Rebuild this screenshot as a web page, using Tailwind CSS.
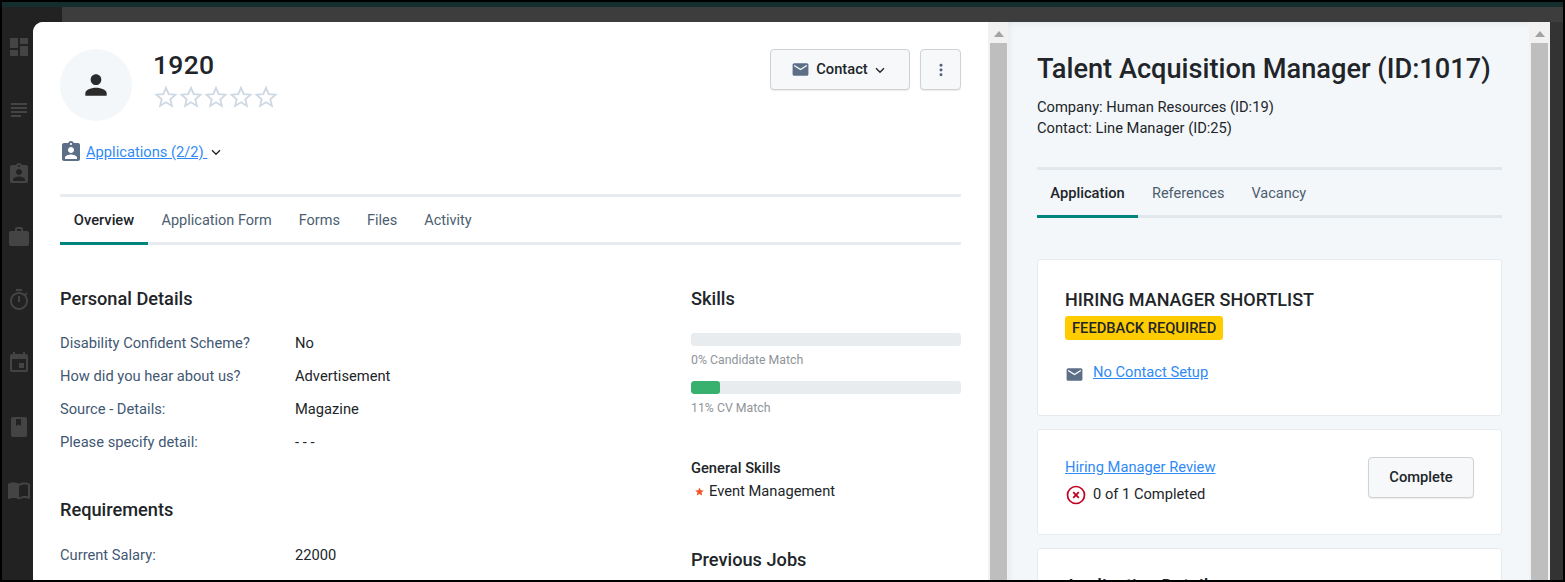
<!DOCTYPE html>
<html>
<head>
<meta charset="utf-8">
<script src="https://cdn.jsdelivr.net/npm/@tailwindcss/browser@4"></script>
</head>
<body class="bg-black">
<div class="relative w-[1565px] h-[582px] overflow-hidden bg-black font-['Roboto',sans-serif] text-[14.7px] text-[#212529]">
  <!-- Backdrop -->
  <div class="flex flex-col absolute left-[2px] top-[2px] w-[1561px] h-[578px]">
    <div class="h-[5px] bg-[#142e2e]"></div>
    <div class="flex flex-1">
      <aside class="w-[60px] bg-[#222222] flex flex-col items-start pl-[5px] pt-[28px] gap-[39.300px] text-[#444444]">
        <svg width="24" height="24" viewBox="0 0 24 24" fill="currentColor"><path d="M3 13h8V3H3v10zm0 8h8v-6H3v6zm10 0h8V11h-8v10zm0-18v6h8V3h-8z"/></svg>
        <svg width="24" height="24" viewBox="0 0 24 24" fill="currentColor"><path d="M14 17H4v2h10v-2zm6-8H4v2h16V9zM4 15h16v-2H4v2zM4 5v2h16V5H4z"/></svg>
        <svg width="24" height="24" viewBox="0 0 24 24" fill="currentColor"><path d="M19 3h-4.180C14.400 1.840 13.300 1 12 1s-2.400.84-2.820 2H5c-1.100 0-2 .9-2 2v14c0 1.100.9 2 2 2h14c1.100 0 2-.9 2-2V5c0-1.100-.9-2-2-2zm-7 0c.55 0 1 .45 1 1s-.45 1-1 1-1-.45-1-1 .45-1 1-1zm0 4c1.660 0 3 1.340 3 3s-1.340 3-3 3-3-1.340-3-3 1.340-3 3-3zm6 12H6v-1.400c0-2 4-3.100 6-3.100s6 1.100 6 3.100V19z"/></svg>
        <svg width="24" height="24" viewBox="0 0 24 24" fill="currentColor"><path d="M20 6h-4V4c0-1.110-.89-2-2-2h-4c-1.110 0-2 .89-2 2v2H4c-1.110 0-1.990.89-1.990 2L2 19c0 1.110.89 2 2 2h16c1.110 0 2-.89 2-2V8c0-1.110-.89-2-2-2zm-6 0h-4V4h4v2z"/></svg>
        <svg width="24" height="24" viewBox="0 0 24 24" fill="currentColor"><path d="M15 1H9v2h6V1zm-4 13h2V8h-2v6zm8.030-6.610l1.420-1.420c-.43-.51-.9-.99-1.410-1.410l-1.420 1.420C16.070 4.740 14.120 4 12 4c-4.970 0-9 4.030-9 9s4.020 9 9 9 9-4.030 9-9c0-2.120-.74-4.070-1.970-5.610zM12 20c-3.870 0-7-3.130-7-7s3.130-7 7-7 7 3.130 7 7-3.130 7-7 7z"/></svg>
        <svg width="24" height="24" viewBox="0 0 24 24" fill="currentColor"><path d="M17 12h-5v5h5v-5zM16 1v2H8V1H6v2H5c-1.110 0-1.990.9-1.990 2L3 19c0 1.100.89 2 2 2h14c1.100 0 2-.9 2-2V5c0-1.100-.9-2-2-2h-1V1h-2zm3 18H5V8h14v11z"/></svg>
        <svg width="24" height="24" viewBox="0 0 24 24" fill="currentColor"><path d="M18 2H6c-1.100 0-2 .9-2 2v16c0 1.100.9 2 2 2h12c1.100 0 2-.9 2-2V4c0-1.100-.9-2-2-2zM9 4h5v7l-2.500-1.500L9 11V4z"/></svg>
        <svg width="24" height="24" viewBox="0 0 24 24" fill="currentColor"><path d="M21 5c-1.110-.35-2.330-.5-3.500-.5-1.950 0-4.050.4-5.500 1.500-1.450-1.100-3.550-1.500-5.500-1.500S2.450 4.900 1 6v14.650c0 .25.25.5.5.5.1 0 .15-.05.25-.05C3.100 20.450 5.050 20 6.500 20c1.950 0 4.050.4 5.500 1.500 1.350-.85 3.800-1.500 5.500-1.500 1.650 0 3.350.3 4.750 1.050.1.05.15.05.25.05.25 0 .5-.25.5-.5V6c-.6-.45-1.250-.75-2-1zm0 13.500c-1.100-.35-2.300-.5-3.500-.5-1.700 0-4.150.65-5.500 1.500V8c1.350-.85 3.800-1.500 5.500-1.500 1.200 0 2.400.15 3.500.5v11.500z"/></svg>
      </aside>
      <div class="flex-1 flex flex-col bg-[#333333]">
        <div class="h-[15px] bg-[#3d3d3d]"></div>
      </div>
    </div>
  </div>

  <!-- Modal window -->
  <div class="absolute left-[33px] top-[22px] w-[1517px] h-[558px] flex rounded-tl-[10px] overflow-hidden bg-white">
    <!-- Left pane -->
    <section class="w-[955px] shrink-0 px-[27px] pt-[27px] bg-white overflow-hidden">
      <div class="flex justify-between items-start">
        <div class="flex">
          <div class="w-[72px] h-[72px] rounded-full bg-[#f4f7fa] flex items-center justify-center">
            <svg width="32" height="32" viewBox="0 0 24 24" fill="#2b2b2b"><path d="M12 12c2.210 0 4-1.790 4-4s-1.790-4-4-4-4 1.790-4 4 1.790 4 4 4zm0 2c-2.670 0-8 1.340-8 4v2h16v-2c0-2.660-5.330-4-8-4z"/></svg>
          </div>
          <div class="ml-[21px]">
            <h1 class="text-[26.500px] leading-[30px] font-medium tracking-[0.3px] text-[#212529] mt-[1px]">1920</h1>
            <div class="flex mt-[5px] ml-[1px] gap-[1px] text-[#ced8e2]">
              <svg width="24" height="24" viewBox="0 0 24 24" fill="none" stroke="currentColor" stroke-width="1.800"><path d="M12 2.800l2.700 6.300 6.800.6-5.200 4.500 1.600 6.700-5.900-3.600-5.900 3.600 1.600-6.700-5.200-4.500 6.800-.6z"/></svg>
              <svg width="24" height="24" viewBox="0 0 24 24" fill="none" stroke="currentColor" stroke-width="1.800"><path d="M12 2.800l2.700 6.300 6.800.6-5.200 4.500 1.600 6.700-5.900-3.600-5.900 3.600 1.600-6.700-5.200-4.500 6.800-.6z"/></svg>
              <svg width="24" height="24" viewBox="0 0 24 24" fill="none" stroke="currentColor" stroke-width="1.800"><path d="M12 2.800l2.700 6.300 6.800.6-5.200 4.500 1.600 6.700-5.900-3.600-5.900 3.600 1.600-6.700-5.200-4.500 6.800-.6z"/></svg>
              <svg width="24" height="24" viewBox="0 0 24 24" fill="none" stroke="currentColor" stroke-width="1.800"><path d="M12 2.800l2.700 6.300 6.800.6-5.200 4.500 1.600 6.700-5.900-3.600-5.900 3.600 1.600-6.700-5.200-4.500 6.800-.6z"/></svg>
              <svg width="24" height="24" viewBox="0 0 24 24" fill="none" stroke="currentColor" stroke-width="1.800"><path d="M12 2.800l2.700 6.300 6.800.6-5.200 4.500 1.600 6.700-5.900-3.600-5.900 3.600 1.600-6.700-5.200-4.500 6.800-.6z"/></svg>
            </div>
          </div>
        </div>
        <div class="flex gap-[10px]">
          <button class="w-[140px] h-[41px] pr-[1px] flex items-center justify-center rounded-[4px] border border-[#d0d3d6] bg-[#f6f8fa] font-medium shadow-[0_1px_1px_rgba(0,0,0,0.08)]">
            <svg class="mr-[6px]" width="19" height="19" viewBox="0 0 24 24" fill="#5c6f87"><path d="M20 4H4c-1.100 0-1.990.9-1.990 2L2 18c0 1.100.9 2 2 2h16c1.100 0 2-.9 2-2V6c0-1.100-.9-2-2-2zm0 4l-8 5-8-5V6l8 5 8-5v2z"/></svg>
            Contact
            <svg class="ml-[4px]" width="16" height="16" viewBox="0 0 24 24" fill="none" stroke="#212529" stroke-width="2"><path d="M6 9.500l6 6 6-6"/></svg>
          </button>
          <button class="w-[41px] h-[41px] flex items-center justify-center rounded-[4px] border border-[#d0d3d6] bg-[#f6f8fa] shadow-[0_1px_1px_rgba(0,0,0,0.08)]">
            <svg width="16" height="16" viewBox="0 0 24 24" fill="#4d6178"><circle cx="12" cy="5" r="2.200"/><circle cx="12" cy="12" r="2.200"/><circle cx="12" cy="19" r="2.200"/></svg>
          </button>
        </div>
      </div>

      <div class="flex items-center mt-[19px] h-[24px]">
        <svg class="ml-[-1px]" width="24" height="24" viewBox="0 0 24 24" fill="#5c6f87"><path d="M19 3h-4.180C14.400 1.840 13.300 1 12 1s-2.400.84-2.820 2H5c-1.100 0-2 .9-2 2v14c0 1.100.9 2 2 2h14c1.100 0 2-.9 2-2V5c0-1.100-.9-2-2-2zm-7 0c.55 0 1 .45 1 1s-.45 1-1 1-1-.45-1-1 .45-1 1-1zm0 4c1.660 0 3 1.340 3 3s-1.340 3-3 3-3-1.340-3-3 1.340-3 3-3zm6 12H6v-1.400c0-2 4-3.100 6-3.100s6 1.100 6 3.100V19z"/></svg>
        <a class="ml-[3px] text-[#2f8af5] underline whitespace-pre">Applications (2/2) </a>
        <svg class="ml-[1px]" width="16" height="16" viewBox="0 0 24 24" fill="none" stroke="#212529" stroke-width="2"><path d="M6 9.500l6 6 6-6"/></svg>
      </div>

      <nav class="mt-[30px] h-[51px] border-y-[3px] border-[#e9ecef] flex text-[14.500px]">
        <a class="h-[48px] -mb-[3px] w-[88px] pt-[1px] flex items-center justify-center text-[14.700px] font-medium text-[#212529] border-b-[3px] border-[#00857c]">Overview</a>
        <a class="ml-[13.500px] h-[47px] flex items-center text-[#4c5e70]">Application Form</a>
        <a class="ml-[27px] h-[47px] flex items-center text-[#4c5e70]">Forms</a>
        <a class="ml-[27px] h-[47px] flex items-center text-[#4c5e70]">Files</a>
        <a class="ml-[27px] h-[47px] flex items-center text-[#4c5e70]">Activity</a>
      </nav>

      <div class="flex mt-[43px]">
        <div class="w-[631px] shrink-0">
          <h2 class="text-[18.200px] leading-[22px] font-medium text-[#212529]">Personal Details</h2>
          <dl class="mt-[17px] grid grid-cols-[235px_1fr] auto-rows-[33px] leading-[33px]">
            <dt class="text-[#3f5873]">Disability Confident Scheme?</dt><dd>No</dd>
            <dt class="text-[#3f5873]">How did you hear about us?</dt><dd>Advertisement</dd>
            <dt class="text-[#3f5873]">Source - Details:</dt><dd>Magazine</dd>
            <dt class="text-[#3f5873]">Please specify detail:</dt><dd>- - -</dd>
          </dl>
          <h2 class="mt-[40px] text-[18.200px] leading-[22px] font-medium text-[#212529]">Requirements</h2>
          <dl class="mt-[18px] grid grid-cols-[235px_1fr] auto-rows-[33px] leading-[33px]">
            <dt class="text-[#3f5873]">Current Salary:</dt><dd>22000</dd>
            <dt class="text-[#3f5873]">Expected Salary:</dt><dd>25000</dd>
          </dl>
        </div>
        <div class="w-[270px] shrink-0">
          <h2 class="text-[18.200px] leading-[22px] font-medium text-[#212529]">Skills</h2>
          <div class="mt-[23px] h-[13px] rounded-[3px] bg-[#e9ecef]"></div>
          <p class="mt-[6px] text-[12.300px] leading-[16px] text-[#8e9499]">0% Candidate Match</p>
          <div class="mt-[13px] h-[13px] rounded-[3px] bg-[#e9ecef] overflow-hidden"><div class="h-full rounded-[3px] bg-[#38b06e]" style="width:29px"></div></div>
          <p class="mt-[6px] text-[12.300px] leading-[16px] text-[#8e9499]">11% CV Match</p>
          <h3 class="mt-[42px] font-medium leading-[20px]">General Skills</h3>
          <p class="mt-[3px] leading-[20px] flex items-center">
            <svg class="ml-[4px] mr-[5px]" width="9" height="9" viewBox="0 0 24 24" fill="#f0562b"><path d="M12 1l3.300 7.600 8.200.7-6.200 5.400 1.900 8.100L12 18.500l-7.200 4.300 1.900-8.100L.5 9.300l8.200-.7z"/></svg>
            Event Management
          </p>
          <h2 class="mt-[48px] text-[18.200px] leading-[22px] font-medium text-[#212529]">Previous Jobs</h2>
        </div>
      </div>
    </section>

    <!-- Left scrollbar -->
    <div class="w-[20px] shrink-0 bg-[#f1f1f1] flex flex-col items-center pl-[1px]">
      <svg class="mt-[9px]" width="10" height="6" viewBox="0 0 10 6" fill="#a3a3a3"><path d="M5 0l5 6H0z"/></svg>
      <div class="mt-[6px] flex-1 w-[17px] bg-[#bebebe]"></div>
    </div>

    <!-- Right pane -->
    <section class="w-[521px] shrink-0 bg-[#f4f7fa] pl-[29px] pr-[27px] pt-[28px] overflow-hidden shadow-[inset_6px_6px_8px_-6px_rgba(0,0,0,0.08)]">
      <h1 class="text-[27.200px] leading-[38px] font-medium whitespace-nowrap text-[#212529]">Talent Acquisition Manager (ID:1017)</h1>
      <p class="mt-[9px] leading-[21px]">Company: Human Resources (ID:19)</p>
      <p class="leading-[21px]">Contact: Line Manager (ID:25)</p>
      <nav class="mt-[28px] h-[51px] border-y-[3px] border-[#e2e7eb] flex text-[14.500px]">
        <a class="h-[48px] -mb-[3px] w-[101px] pt-[1px] flex items-center justify-center text-[14.700px] font-medium text-[#212529] border-b-[3px] border-[#00857c]">Application</a>
        <a class="ml-[14px] h-[47px] flex items-center text-[#4c5e70]">References</a>
        <a class="ml-[27px] h-[47px] flex items-center text-[#4c5e70]">Vacancy</a>
      </nav>

      <div class="mt-[41px] h-[157px] rounded-[3px] border border-[#e6ebef] bg-white px-[27px] pt-[28px]">
        <h3 class="text-[18px] leading-[24px] font-medium text-[#212529]">HIRING MANAGER SHORTLIST</h3>
        <span class="inline-block mt-[4px] h-[24px] px-[7px] rounded-[3px] bg-[#ffcc00] font-medium leading-[24px] align-top text-[#212529]">FEEDBACK REQUIRED</span>
        <div class="flex items-center mt-[22px] h-[20px]">
          <svg class="mt-[4px]" width="19" height="19" viewBox="0 0 24 24" fill="#5c6f87"><path d="M20 4H4c-1.100 0-1.990.9-1.990 2L2 18c0 1.100.9 2 2 2h16c1.100 0 2-.9 2-2V6c0-1.100-.9-2-2-2zm0 4l-8 5-8-5V6l8 5 8-5v2z"/></svg>
          <a class="ml-[9px] text-[#2f8af5] underline">No Contact Setup</a>
        </div>
      </div>

      <div class="mt-[13px] h-[106px] rounded-[3px] border border-[#e6ebef] bg-white pl-[27px] pr-[27px] pt-[27px] flex items-start justify-between">
        <div>
          <a class="block leading-[20px] text-[#2f8af5] underline">Hiring Manager Review</a>
          <div class="flex items-center mt-[6px] h-[22px]">
            <svg width="20" height="20" viewBox="0 0 20 20" fill="none" stroke="#c0001f" class="mt-[1px] ml-[1px]"><circle cx="10" cy="10" r="8.500" stroke-width="1.700"/><path d="M7.200 7.200l5.600 5.600M12.800 7.200l-5.600 5.600" stroke-width="1.800"/></svg>
            <span class="ml-[7px]">0 of 1 Completed</span>
          </div>
        </div>
        <button class="w-[106px] h-[41px] rounded-[4px] border border-[#d0d3d6] bg-[#f6f8fa] font-medium shadow-[0_1px_1px_rgba(0,0,0,0.08)]">Complete</button>
      </div>

      <div class="mt-[13px] h-[100px] rounded-[3px] border border-[#e6ebef] bg-white px-[27px] pt-[26px]">
        <h3 class="text-[18.200px] leading-[22px] font-medium text-[#212529]">Application Details</h3>
      </div>
    </section>

    <!-- Right scrollbar -->
    <div class="w-[21px] shrink-0 bg-[#f1f1f1] flex flex-col items-center">
      <svg class="mt-[9px]" width="10" height="6" viewBox="0 0 10 6" fill="#a3a3a3"><path d="M5 0l5 6H0z"/></svg>
      <div class="mt-[6px] flex-1 w-[17px] bg-[#bebebe]"></div>
    </div>
  </div>
</div>
</body>
</html>
